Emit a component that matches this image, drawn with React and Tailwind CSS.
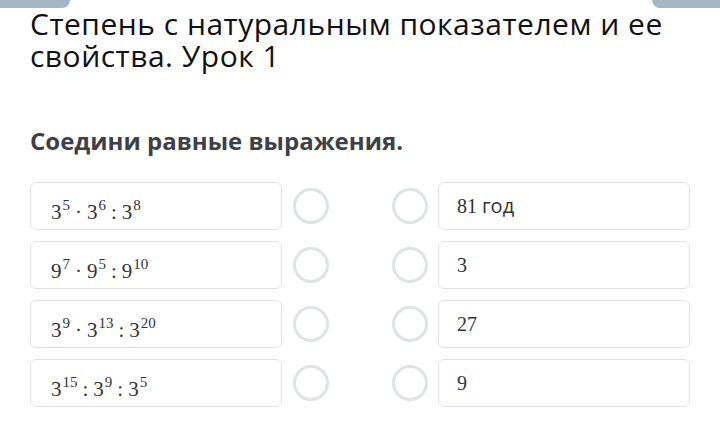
import React from "react";

const serif = { fontFamily: '"Liberation Serif", "DejaVu Serif", serif' };

function Pow({ b, e }) {
  return (
    <span>
      {b}
      <span className="text-[15px] align-[9px] ml-[1px]">{e}</span>
    </span>
  );
}

function Op({ c }) {
  return <span className="mx-[5px]">{c}</span>;
}

const left = [
  [<Pow b="3" e="5" />, <Op c="·" />, <Pow b="3" e="6" />, <Op c=":" />, <Pow b="3" e="8" />],
  [<Pow b="9" e="7" />, <Op c="·" />, <Pow b="9" e="5" />, <Op c=":" />, <Pow b="9" e="10" />],
  [<Pow b="3" e="9" />, <Op c="·" />, <Pow b="3" e="13" />, <Op c=":" />, <Pow b="3" e="20" />],
  [<Pow b="3" e="15" />, <Op c=":" />, <Pow b="3" e="9" />, <Op c=":" />, <Pow b="3" e="5" />],
];

const right = [
  <span>
    81 <span className="font-['Open_Sans',sans-serif]">год</span>
  </span>,
  "3",
  "27",
  "9",
];

function Circle() {
  return <div className="w-[36px] h-[36px] rounded-full border-[3px] border-[#dfe3e4] shrink-0" />;
}

export default function App() {
  return (
    <div className="w-[720px] h-[431px] bg-white relative overflow-hidden font-['Open_Sans',sans-serif]">
      <div className="absolute left-0 top-0 w-[70px] h-[8px] bg-[#a5b5c4] rounded-br-[8px]" />
      <div className="absolute right-0 top-0 w-[68px] h-[8px] bg-[#a5b5c4] rounded-bl-[8px]" />
      <div className="px-[30px] pt-[8px]">
        <h1 className="text-[30px] leading-[32px] text-[#111] tracking-[0.5px] font-normal">
          Степень с натуральным показателем и ее свойства. Урок 1
        </h1>
        <h2 className="mt-[54px] text-[24px] leading-[30px] font-bold text-[#3d4046]">
          Соедини равные выражения.
        </h2>
        <div className="mt-[26px] flex flex-col gap-[11px]">
          {left.map((expr, i) => (
            <div key={i} className="flex items-center h-[48px]">
              <div
                className="w-[252px] h-[48px] border border-[#e2e2e2] rounded-[6px] flex items-center pl-[20px] pt-[5px] text-[21px] leading-[28px] text-[#333]"
                style={serif}
              >
                <span className="whitespace-pre">{expr}</span>
              </div>
              <div className="ml-[11px]"><Circle /></div>
              <div className="ml-[63px]"><Circle /></div>
              <div
                className="ml-[10px] w-[252px] h-[48px] border border-[#e2e2e2] rounded-[6px] flex items-center pl-[18px] text-[20px] text-[#333]"
                style={serif}
              >
                {right[i]}
              </div>
            </div>
          ))}
        </div>
      </div>
    </div>
  );
}
